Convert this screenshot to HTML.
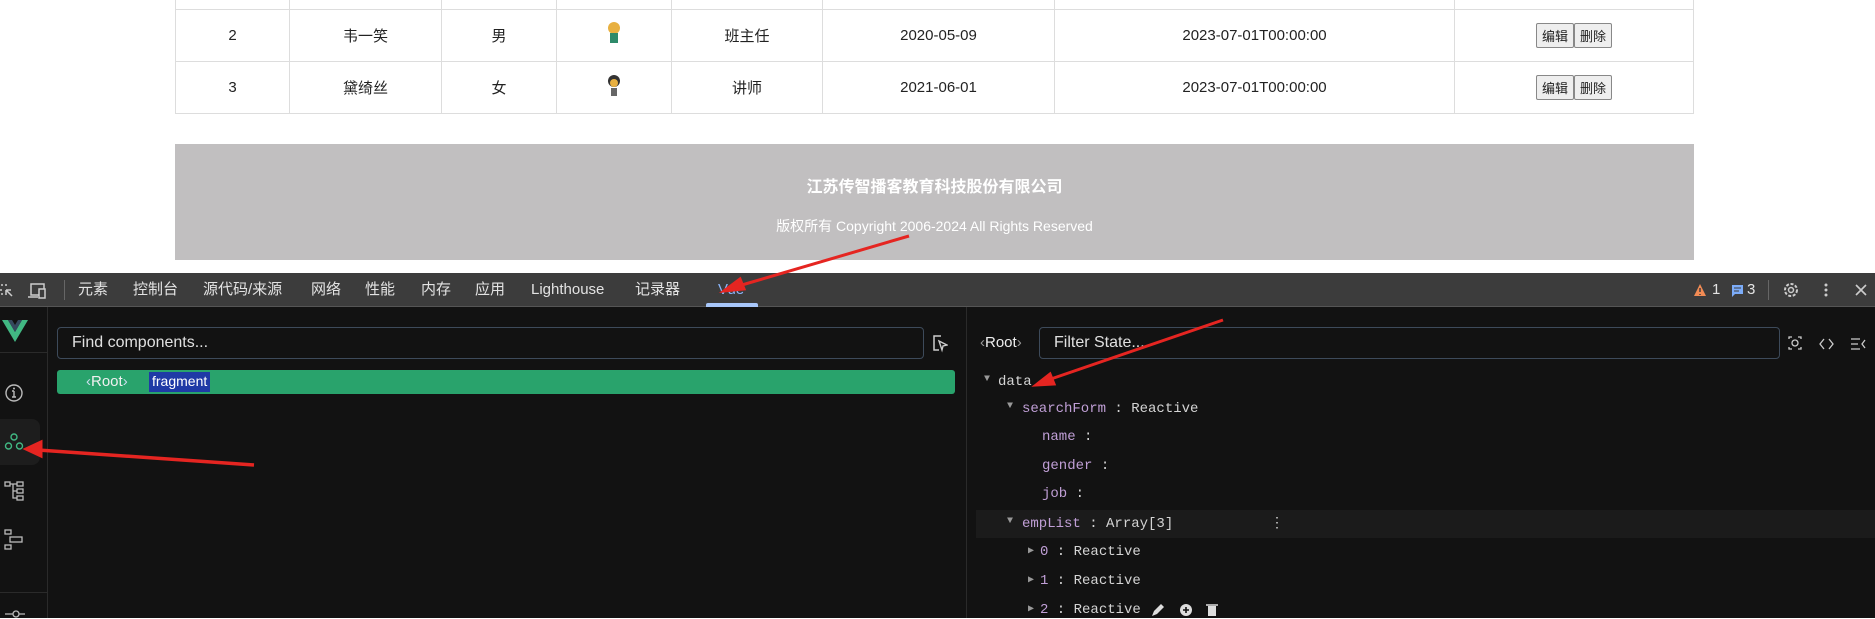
<!DOCTYPE html>
<html><head><meta charset="utf-8"><style>
*{margin:0;padding:0;box-sizing:border-box}
body{width:1875px;height:618px;overflow:hidden;background:#fff;position:relative;font-family:"Liberation Sans","Noto Sans CJK SC",sans-serif}
.abs{position:absolute}
table{position:absolute;left:175px;top:-43px;width:1519px;border-collapse:collapse;font-size:15px;color:#222}
td{border:1px solid #ddd;height:52px;text-align:center}
.btn{display:inline-block;border:1px solid #888;background:#eee;border-radius:2px;font-size:13px;padding:2px 5px;margin:0}
.foot{left:175px;top:144px;width:1519px;height:116px;background:#c1bfc0;color:#fff;text-align:center}
.tb{left:0;top:273px;width:1875px;height:34px;background:#3c3c3c;border-bottom:1px solid #555;color:#e3e3e3;font-size:15px}
.tb span{position:absolute;top:8px;line-height:18px;height:18px;display:block}
.pane{left:0;top:307px;width:1875px;height:311px;background:#121212}
.mono{font-family:"Liberation Mono","DejaVu Sans Mono",monospace;font-size:14px}
.k{color:#c09fd6}.v{color:#d4d4d4}
</style></head><body>
<table>
<tr><td style="width:114px">1</td><td style="width:152px"></td><td style="width:115px"></td><td style="width:115px"></td><td style="width:151px"></td><td style="width:232px"></td><td style="width:400px"></td><td></td></tr>
<tr><td>2</td><td>韦一笑</td><td>男</td><td><svg width="18" height="26"><circle cx="9" cy="7" r="6" fill="#e8b040"/><rect x="5" y="12" width="8" height="10" fill="#2e8a6a"/></svg></td><td>班主任</td><td>2020-05-09</td><td>2023-07-01T00:00:00</td><td><span class="btn">编辑</span><span class="btn">删除</span></td></tr>
<tr><td>3</td><td>黛绮丝</td><td>女</td><td><svg width="18" height="26"><circle cx="9" cy="8" r="6" fill="#333"/><circle cx="9" cy="10" r="4" fill="#e8b040"/><rect x="6" y="15" width="6" height="8" fill="#666"/></svg></td><td>讲师</td><td>2021-06-01</td><td>2023-07-01T00:00:00</td><td><span class="btn">编辑</span><span class="btn">删除</span></td></tr>
</table>
<div class="abs foot"><div style="position:absolute;top:29px;width:100%;font-size:16px;font-weight:bold">江苏传智播客教育科技股份有限公司</div><div style="position:absolute;top:72px;width:100%;font-size:14px">版权所有 Copyright 2006-2024 All Rights Reserved</div></div>

<div class="abs tb">
<svg class="abs" style="left:0;top:9px" width="60" height="18"><path d="M1 3h2M5 3h2M1 7v2M1 12h2M6 8l6 6M6 8h5M6 8v5" stroke="#ccc" stroke-width="1.5" fill="none"/><rect x="31" y="2" width="13" height="11" stroke="#ccc" fill="none" stroke-width="1.5"/><rect x="39" y="7" width="6" height="9" stroke="#ccc" fill="#3c3c3c" stroke-width="1.5"/><path d="M28 15h10" stroke="#ccc" stroke-width="1.5"/></svg>
<div class="abs" style="left:64px;top:7px;width:1px;height:20px;background:#666"></div>
<span style="left:78px">元素</span><span style="left:133px">控制台</span><span style="left:203px">源代码/来源</span><span style="left:311px">网络</span><span style="left:365px">性能</span><span style="left:421px">内存</span><span style="left:475px">应用</span><span style="left:531px">Lighthouse</span><span style="left:635px">记录器</span><span style="left:718px;color:#8ab4f8">Vue</span>
<div class="abs" style="left:706px;top:30px;width:52px;height:4px;background:#a8c7fa;border-radius:2px 2px 0 0"></div>
<svg class="abs" style="left:1693px;top:10px" width="14" height="14"><path d="M7 1L13 13H1Z" fill="#f28b54"/><path d="M7 5v4M7 11v1" stroke="#3c3c3c" stroke-width="1.5"/></svg><span style="left:1712px">1</span>
<svg class="abs" style="left:1731px;top:11px" width="13" height="13"><path d="M1 1h11v9H4l-3 3z" fill="#7cacf8"/><path d="M3 4h7M3 7h5" stroke="#3c3c3c"/></svg><span style="left:1747px">3</span>
<div class="abs" style="left:1768px;top:7px;width:1px;height:20px;background:#666"></div>
<svg class="abs" style="left:1782px;top:8px" width="18" height="18"><circle cx="9" cy="9" r="6" stroke="#ccc" stroke-width="2" fill="none" stroke-dasharray="3 1.6"/><circle cx="9" cy="9" r="2.5" stroke="#ccc" stroke-width="1.5" fill="none"/></svg>
<svg class="abs" style="left:1824px;top:9px" width="4" height="16"><circle cx="2" cy="3" r="1.5" fill="#ccc"/><circle cx="2" cy="8" r="1.5" fill="#ccc"/><circle cx="2" cy="13" r="1.5" fill="#ccc"/></svg>
<svg class="abs" style="left:1855px;top:11px" width="12" height="12"><path d="M1 1l10 10M11 1L1 11" stroke="#ccc" stroke-width="1.6"/></svg>
</div>

<div class="abs pane">
<div class="abs" style="left:47px;top:0;width:1px;height:311px;background:#2a2a2a"></div>
<div class="abs" style="left:0;top:45px;width:47px;height:1px;background:#2a2a2a"></div>
<div class="abs" style="left:0;top:285px;width:47px;height:1px;background:#2a2a2a"></div>
<svg class="abs" style="left:2px;top:13px" width="26" height="22"><path d="M0 0h6l7 12 7-12h6L13 22z" fill="#41b883"/><path d="M6 0h4l3 5 3-5h4l-7 12z" fill="#34495e"/></svg>
<svg class="abs" style="left:4px;top:76px" width="20" height="20"><circle cx="10" cy="10" r="8" stroke="#bbb" fill="none" stroke-width="1.4"/><path d="M10 8v6M8 14h4M8 8h2" stroke="#bbb" stroke-width="1.4"/><circle cx="10" cy="5.5" r="1" fill="#bbb"/></svg>
<div class="abs" style="left:0;top:112px;width:40px;height:46px;background:#1d1d1d;border-radius:0 8px 8px 0"></div>
<svg class="abs" style="left:3px;top:125px" width="22" height="20"><g stroke="#41b883" stroke-width="1.4" fill="none"><circle cx="11" cy="5" r="3"/><circle cx="5.5" cy="14" r="3"/><circle cx="16.5" cy="14" r="3"/></g></svg>
<svg class="abs" style="left:4px;top:173px" width="22" height="22"><g stroke="#bbb" stroke-width="1.3" fill="none"><rect x="1" y="2" width="5" height="4"/><rect x="13" y="2" width="6" height="4"/><rect x="13" y="9" width="6" height="4"/><rect x="13" y="16" width="6" height="4"/><path d="M6 4h7M9 4v14h4M9 11h4"/></g></svg>
<svg class="abs" style="left:4px;top:222px" width="22" height="22"><g stroke="#bbb" stroke-width="1.3" fill="none"><rect x="1" y="1" width="6" height="4"/><rect x="6" y="8" width="12" height="5"/><rect x="1" y="16" width="6" height="4"/></g></svg>
<svg class="abs" style="left:4px;top:302px" width="22" height="10"><path d="M1 5h20" stroke="#bbb" stroke-width="1.3"/><circle cx="12" cy="5" r="3" stroke="#bbb" fill="#121212" stroke-width="1.3"/></svg>

<div class="abs" style="left:57px;top:20px;width:867px;height:32px;border:1px solid #3d4a5a;border-radius:4px;color:#e0e0e0;font-size:16px;padding:6px 14px">Find components...</div>
<svg class="abs" style="left:932px;top:28px" width="16" height="18"><path d="M9 1H2v14h5" stroke="#ccc" stroke-width="1.5" fill="none"/><path d="M7 6l8 4-4 1-1 4z" stroke="#ccc" stroke-width="1.4" fill="none"/></svg>
<div class="abs" style="left:57px;top:63px;width:898px;height:24px;background:#29a36c;border-radius:3px"></div>
<div class="abs" style="left:86px;top:66px;color:#f0f0f0;font-size:15px"><span style="color:#cde">‹</span>Root<span style="color:#cde">›</span></div>
<div class="abs" style="left:149px;top:65px;height:20px;background:#1f3aa6;color:#fff;font-size:14px;padding:1px 3px">fragment</div>

<div class="abs" style="left:966px;top:0;width:1px;height:311px;background:#2a2a2a"></div>
<div class="abs" style="left:980px;top:27px;color:#eee;font-size:15px"><span style="color:#999">‹</span>Root<span style="color:#999">›</span></div>
<div class="abs" style="left:1039px;top:20px;width:741px;height:32px;border:1px solid #3d4a5a;border-radius:4px;color:#e0e0e0;font-size:16px;padding:6px 14px">Filter State...</div>
<svg class="abs" style="left:1787px;top:28px" width="80" height="18"><g stroke="#ccc" fill="none" stroke-width="1.3"><circle cx="8" cy="8" r="3"/><path d="M2 4V2h3M11 2h3v2M2 12v2h3M14 12v2h-3"/><path d="M37 4l-4 5 4 5M42 4l4 5-4 5"/><path d="M64 4h9M64 9h7M64 14h9M78 5l-3 4 3 4"/></g></svg>

<div class="abs" style="left:976px;top:203px;width:899px;height:28px;background:#1b1b1b"></div>
<div class="mono">
<div class="abs" style="left:984px;top:67px;color:#999;font-size:10px">▼</div><div class="abs v" style="left:998px;top:67px">data</div>
<div class="abs" style="left:1007px;top:94px;color:#999;font-size:10px">▼</div><div class="abs" style="left:1022px;top:94px"><span class="k">searchForm</span><span class="v"> : Reactive</span></div>
<div class="abs" style="left:1042px;top:122px"><span class="k">name</span><span class="v"> :</span></div>
<div class="abs" style="left:1042px;top:151px"><span class="k">gender</span><span class="v"> :</span></div>
<div class="abs" style="left:1042px;top:179px"><span class="k">job</span><span class="v"> :</span></div>
<div class="abs" style="left:1007px;top:209px;color:#999;font-size:10px">▼</div><div class="abs" style="left:1022px;top:209px"><span class="k">empList</span><span class="v"> : Array[3]</span></div>
<div class="abs v" style="left:1270px;top:208px">⋮</div>
<div class="abs" style="left:1028px;top:238px;color:#999;font-size:10px">▶</div><div class="abs" style="left:1040px;top:237px"><span class="k">0</span><span class="v"> : Reactive</span></div>
<div class="abs" style="left:1028px;top:267px;color:#999;font-size:10px">▶</div><div class="abs" style="left:1040px;top:266px"><span class="k">1</span><span class="v"> : Reactive</span></div>
<div class="abs" style="left:1028px;top:296px;color:#999;font-size:10px">▶</div><div class="abs" style="left:1040px;top:295px"><span class="k">2</span><span class="v"> : Reactive</span></div>
</div>
<svg class="abs" style="left:1150px;top:295px" width="75" height="16"><path d="M2 14l2-5 7-7 3 3-7 7z" fill="#ddd"/><circle cx="36" cy="8" r="6" fill="#ddd"/><path d="M36 5v6M33 8h6" stroke="#121212" stroke-width="1.6"/><rect x="58" y="4" width="8" height="10" fill="#ddd"/><path d="M56 3h12" stroke="#ddd" stroke-width="1.5"/></svg>
</div>

<svg class="abs" style="left:0;top:0" width="1875" height="618"><g stroke="#e52521" stroke-width="3" fill="#e52521">
<path d="M909 236L735 287" /><path d="M724 291l16-12 4 10z"/>
<path d="M254 465L38 450" stroke-width="3.5"/><path d="M26 449l15-7v14z"/>
<path d="M1223 320L1048 380"/><path d="M1036 385l14-11 4 10z"/>
</g></svg>
</body></html>
